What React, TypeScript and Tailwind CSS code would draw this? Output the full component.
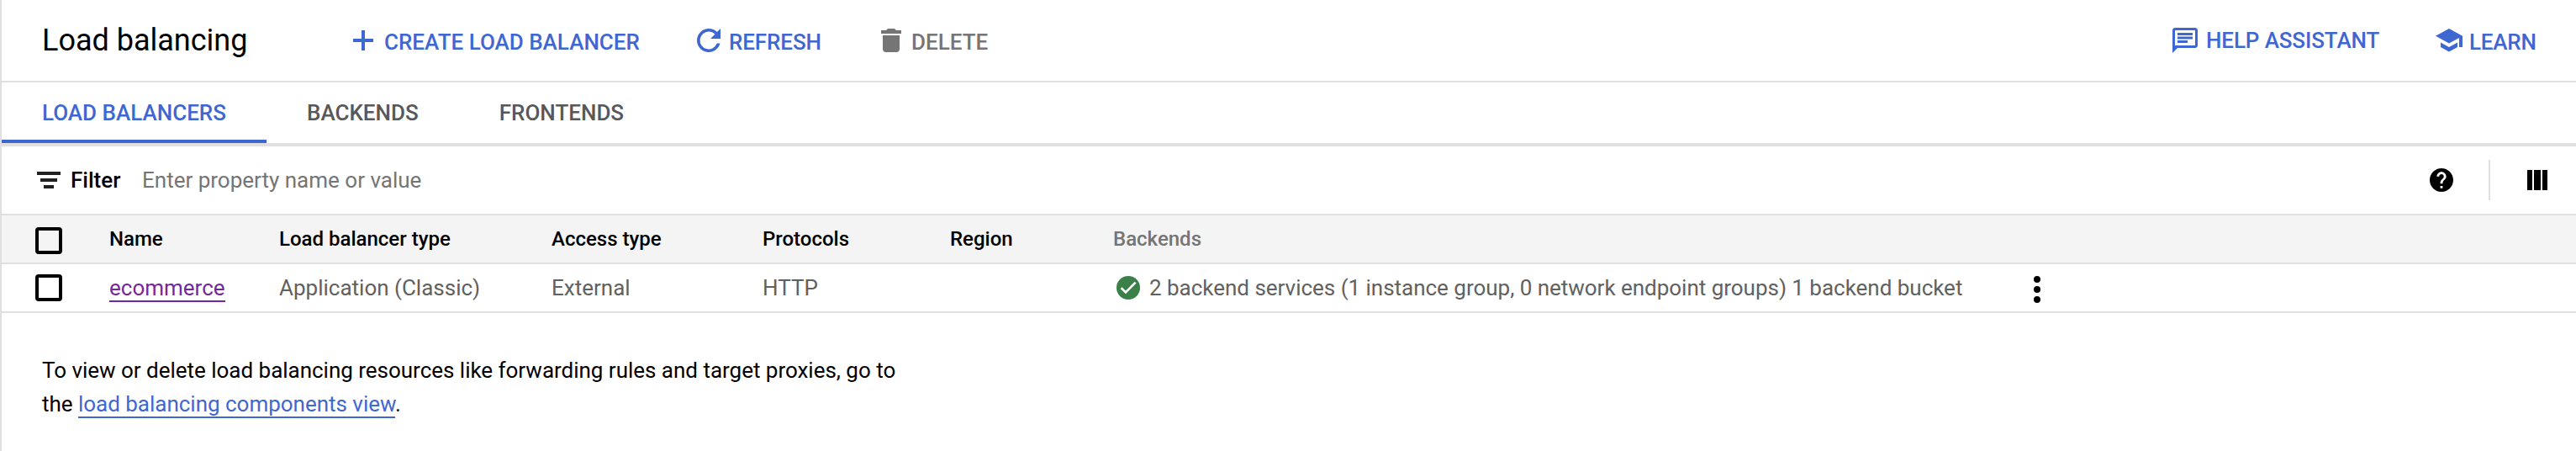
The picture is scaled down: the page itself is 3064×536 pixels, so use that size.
import React from 'react';

type IconProps = { className?: string };

const PlusIcon = ({ className }: IconProps) => (
  <svg viewBox="0 0 18 18" className={className} fill="currentColor">
    <path d="M15 10h-5v5H8v-5H3V8h5V3h2v5h5v2z" />
  </svg>
);

const RefreshIcon = ({ className }: IconProps) => (
  <svg viewBox="0 0 18 18" className={className} fill="currentColor">
    <path d="M13.95 4.05A6.97 6.97 0 0 0 9 2a7 7 0 1 0 6.76 8.8h-1.9A5.2 5.2 0 1 1 9 3.8c1.44 0 2.72.6 3.66 1.54L10 8h6V2l-2.05 2.05z" />
  </svg>
);

const TrashIcon = ({ className }: IconProps) => (
  <svg viewBox="0 0 36 36" className={className} fill="currentColor">
    <path d="M8 28a4 4 0 0 0 4 4h12a4 4 0 0 0 4-4V12H8v16zM30 6h-6l-2-2h-8l-2 2H6v4h24V6z" />
  </svg>
);

const ChatIcon = ({ className }: IconProps) => (
  <svg viewBox="0 0 20 20" className={className} fill="currentColor">
    <path
      fillRule="evenodd"
      d="M2 0h16c1.1 0 2 .9 2 2v12c0 1.1-.9 2-2 2H4l-4 4V2C0 .9.9 0 2 0zm0 2v12h16V2H2zM4 4h12v2H4V4zm0 3h12v2H4V7zm0 3h8v2H4v-2z"
    />
  </svg>
);

const LearnIcon = ({ className }: IconProps) => (
  <svg viewBox="0 0 32 28" className={className} fill="currentColor">
    <path d="M6 16.4V22l10 5.5L26 22v-5.6l-10 5.5-10-5.5zM16 0L0 8.8l16 8.8 12-6.600V22h4V8.8L16 0z" />
  </svg>
);

const FilterIcon = ({ className }: IconProps) => (
  <svg viewBox="0 0 28 20" className={className} fill="currentColor">
    <path d="M0 0h28v4H0zM4 8h20v4H4zM8 16h12v4H8z" />
  </svg>
);

const HelpIcon = ({ className }: IconProps) => (
  <svg viewBox="2 2 20 20" className={className} fill="currentColor">
    <path d="M12 2C6.48 2 2 6.48 2 12s4.48 10 10 10 10-4.48 10-10S17.52 2 12 2zm1 17h-2v-2h2v2zm2.070-7.750l-.9.920C13.450 12.900 13 13.500 13 15h-2v-.5c0-1.100.450-2.100 1.170-2.830l1.240-1.260c.370-.360.590-.860.590-1.410 0-1.100-.9-2-2-2s-2 .9-2 2H8c0-2.210 1.790-4 4-4s4 1.790 4 4c0 .880-.360 1.680-.930 2.250z" />
  </svg>
);

const ColumnsIcon = ({ className }: IconProps) => (
  <svg viewBox="0 0 24 24" className={className} fill="currentColor">
    <path d="M0 0h6v24H0zM8 0h8v24H8zM18 0h6v24h-6z" />
  </svg>
);

const CheckIcon = ({ className }: IconProps) => (
  <svg viewBox="0 0 28 28" className={className}>
    <circle cx="14" cy="14" r="14" fill="#3a8048" />
    <path d="M5.600 14.200l5.400 5.200L22.600 7.700" fill="none" stroke="#fff" strokeWidth="2.600" />
  </svg>
);

const MoreIcon = ({ className }: IconProps) => (
  <svg viewBox="0 0 8 32" className={className} fill="currentColor">
    <circle cx="4" cy="4" r="4" />
    <circle cx="4" cy="16" r="4" />
    <circle cx="4" cy="28" r="4" />
  </svg>
);

const Checkbox = ({ label }: { label: string }) => (
  <span
    role="checkbox"
    aria-checked="false"
    aria-label={label}
    className="block h-8 w-8 rounded-[4px] border-4 border-black"
  />
);

const columns = 'grid grid-cols-[128px_202px_324px_251px_223px_194px_1089px_1fr] items-center';

export default function App() {
  return (
    <main className="h-[536px] w-full border-l-2 border-[#e0e0e0] bg-white font-['Roboto',sans-serif] text-[26px] leading-10 text-black">
      <header className="flex h-[98px] items-center border-b-2 border-[#e0e0e0] pl-12 font-medium text-[#3f67d2]">
        <h1 className="w-[364px] text-[36px] font-normal text-black">Load balancing</h1>
        <button className="flex w-[411px] items-center gap-[7px]">
          <PlusIcon className="h-9 w-9" />
          <span className="pt-1">CREATE LOAD BALANCER</span>
        </button>
        <button className="flex w-[217px] items-center gap-[6px]">
          <RefreshIcon className="h-9 w-9" />
          <span className="pt-1 tracking-[-0.1px]">REFRESH</span>
        </button>
        <button className="flex items-center gap-[6px] text-[#757575]">
          <TrashIcon className="h-9 w-9" />
          <span className="pt-1">DELETE</span>
        </button>
        <div className="ml-auto flex items-center pr-[47px]">
          <button className="flex items-center gap-[10px]">
            <ChatIcon className="h-[30px] w-[30px]" />
            <span className="w-[206px] tracking-[-0.12px] whitespace-nowrap">HELP ASSISTANT</span>
          </button>
          <button className="ml-[67px] flex items-center gap-2">
            <LearnIcon className="h-7 w-8" />
            <span className="w-20 pt-1 text-left tracking-[-0.2px]">LEARN</span>
          </button>
        </div>
      </header>

      <nav className="flex h-[76px] border-b-4 border-[#e0e0e0] font-medium text-[#585858]">
        <a className="flex w-[315px] items-center border-b-4 border-[#3f67d2] pt-1 pl-12 text-[#3f67d2]">LOAD BALANCERS</a>
        <a className="flex items-center px-12">BACKENDS</a>
        <a className="flex items-center px-12">FRONTENDS</a>
      </nav>

      <section className="flex h-[82px] items-center border-b-2 border-[#e0e0e0] pl-[42px]">
        <FilterIcon className="h-5 w-7 text-[#212121]" />
        <span className="ml-3 w-[85px] font-medium">Filter</span>
        <span className="text-[#757575]">Enter property name or value</span>
        <div className="ml-auto flex items-center pr-[34px]">
          <HelpIcon className="h-7 w-7" />
          <div className="ml-[42px] h-12 w-[2px] bg-[#e0e0e0]" />
          <ColumnsIcon className="ml-11 h-6 w-6" />
        </div>
      </section>

      <div role="table">
        <div role="row" className={`${columns} h-[58px] border-b-2 border-[#e0e0e0] bg-[#f4f4f4] text-[24px] font-medium`}>
          <div className="pt-1 pl-10">
            <Checkbox label="Select all" />
          </div>
          <span>Name</span>
          <span>Load balancer type</span>
          <span>Access type</span>
          <span>Protocols</span>
          <span>Region</span>
          <span className="text-[#757575]">Backends</span>
        </div>
        <div role="row" className={`${columns} h-[58px] border-b-2 border-[#e0e0e0] text-[#616161]`}>
          <div className="pl-10">
            <Checkbox label="Select ecommerce" />
          </div>
          <a className="h-[34px] justify-self-start border-b-2 border-[#7627a0] leading-[34px] text-[#7627a0]">ecommerce</a>
          <span>Application (Classic)</span>
          <span>External</span>
          <span>HTTP</span>
          <span />
          <span className="flex items-center gap-[11px] pl-1">
            <CheckIcon className="h-7 w-7" />
            <span className="tracking-[-0.02px]">
              2 backend services (1 instance group, 0 network endpoint groups) 1 backend bucket
            </span>
          </span>
          <MoreIcon className="mt-1 ml-1.5 h-8 w-2 text-black" />
        </div>
      </div>

      <p className="mt-12 ml-12 w-[1040px] tracking-[-0.02px]">
        To view or delete load balancing resources like forwarding rules and target proxies, go to
        <br />
        the <a className="border-b-2 border-[#3f67d2] text-[#3f67d2]">load balancing components view</a>.
      </p>
    </main>
  );
}
